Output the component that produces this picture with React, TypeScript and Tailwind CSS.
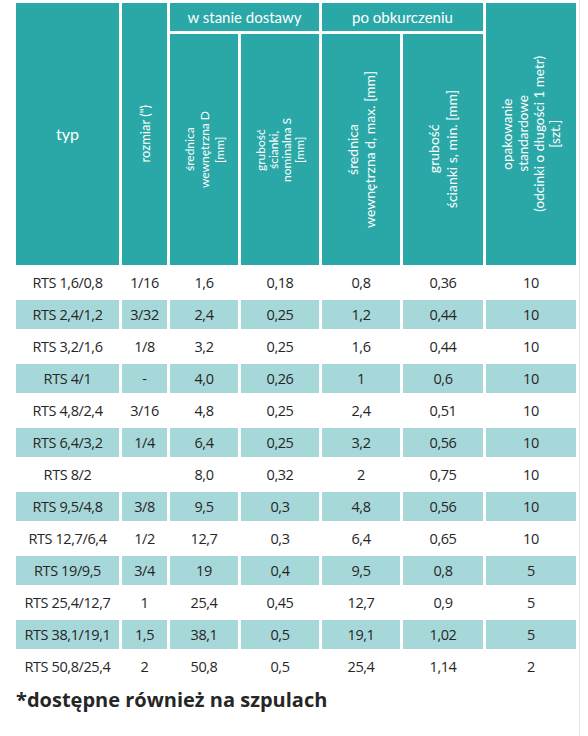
import React from 'react';

type Row = [string, string, string, string, string, string, string];

const rows: Row[] = [
  ['RTS 1,6/0,8', '1/16', '1,6', '0,18', '0,8', '0,36', '10'],
  ['RTS 2,4/1,2', '3/32', '2,4', '0,25', '1,2', '0,44', '10'],
  ['RTS 3,2/1,6', '1/8', '3,2', '0,25', '1,6', '0,44', '10'],
  ['RTS 4/1', '-', '4,0', '0,26', '1', '0,6', '10'],
  ['RTS 4,8/2,4', '3/16', '4,8', '0,25', '2,4', '0,51', '10'],
  ['RTS 6,4/3,2', '1/4', '6,4', '0,25', '3,2', '0,56', '10'],
  ['RTS 8/2', '', '8,0', '0,32', '2', '0,75', '10'],
  ['RTS 9,5/4,8', '3/8', '9,5', '0,3', '4,8', '0,56', '10'],
  ['RTS 12,7/6,4', '1/2', '12,7', '0,3', '6,4', '0,65', '10'],
  ['RTS 19/9,5', '3/4', '19', '0,4', '9,5', '0,8', '5'],
  ['RTS 25,4/12,7', '1', '25,4', '0,45', '12,7', '0,9', '5'],
  ['RTS 38,1/19,1', '1,5', '38,1', '0,5', '19,1', '1,02', '5'],
  ['RTS 50,8/25,4', '2', '50,8', '0,5', '25,4', '1,14', '2'],
];

// vertical header label, reads bottom to top
function Rotated({ lines, cls = 'text-[12px] leading-[16px]' }: { lines: string[]; cls?: string }) {
  return (
    <div className="flex h-full items-center justify-center bg-[#2aa8a8] text-white">
      <div className={`[writing-mode:vertical-rl] rotate-180 text-center ${cls}`}>
        {lines.map((l) => (
          <div key={l}>{l}</div>
        ))}
      </div>
    </div>
  );
}

export default function App() {
  return (
    <div className="h-[736px] w-[588px] bg-white">
      <div className="h-full w-[580px] border-r border-[#e2e2e2] pl-4 pt-[3px] font-['Lato',sans-serif]">
        <div className="grid grid-cols-[103px_45px_68px_78px_78px_80px_90px] grid-rows-[28px_231px] gap-[3px]">
          {/* header */}
          <div className="row-span-2 flex items-center justify-center bg-[#2aa8a8] text-[16px] text-white">
            typ
          </div>
          <div className="row-span-2">
            <Rotated lines={['rozmiar (")']} cls="text-[13px] leading-[16px]" />
          </div>
          <div className="col-span-2 flex items-center justify-center bg-[#2aa8a8] text-[15px] text-white">
            w stanie dostawy
          </div>
          <div className="col-span-2 flex items-center justify-center bg-[#2aa8a8] text-[15px] text-white">
            po obkurczeniu
          </div>
          <div className="row-span-2">
            <Rotated
              lines={['opakowanie', 'standardowe', '(odcinki o długości 1 metr)', '[szt.]']}
              cls="text-[13.5px] leading-[16px]"
            />
          </div>
          <Rotated lines={['średnica', 'wewnętrzna D', '[mm]']} cls="text-[12px] leading-[15px]" />
          <Rotated lines={['grubość', 'ścianki,', 'nominalna S', '[mm]']} cls="text-[12px] leading-[13px]" />
          <Rotated lines={['średnica', 'wewnętrzna d, max. [mm]']} cls="text-[14px] leading-[17px]" />
          <Rotated lines={['grubość', 'ścianki s, min. [mm]']} cls="text-[14px] leading-[18px]" />
        </div>

        {/* body */}
        <div className="mt-[3px] grid grid-cols-[103px_45px_68px_78px_78px_80px_90px] auto-rows-[29px] gap-[3px] font-['Open_Sans',sans-serif] text-[14.5px] text-[#262626]">
          {rows.map((r, i) =>
            r.map((c, j) => (
              <div
                key={`${i}-${j}`}
                className={`flex items-center justify-center tracking-[-0.4px] ${i % 2 === 1 ? 'bg-[#a6d8da]' : ''}`}
              >
                {c}
              </div>
            ))
          )}
        </div>

        <div className="mt-[6px] font-['Open_Sans',sans-serif] text-[20px] font-bold leading-[26px] text-[#262626]">
          *dostępne również na szpulach
        </div>
      </div>
    </div>
  );
}
